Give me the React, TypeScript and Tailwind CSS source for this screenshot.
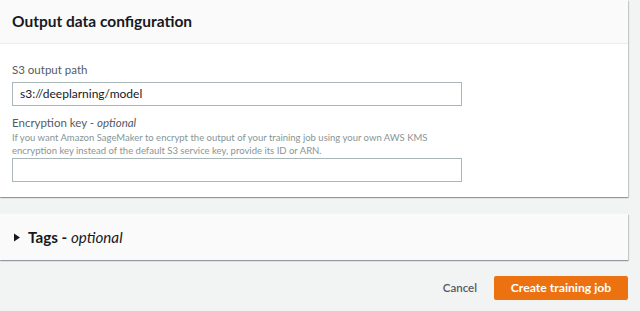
import React from "react";

export default function App() {
  return (
    <div
      className="w-[640px] h-[311px] bg-[#f2f3f3] overflow-hidden"
      style={{ fontFamily: 'Lato, "Liberation Sans", sans-serif' }}
    >
      <div className="w-[628px] bg-white shadow-[0_1px_1px_0_rgba(0,28,36,0.3),1px_1px_1px_0_rgba(0,28,36,0.15)]">
        <div className="h-[44px] bg-[#fafafa] border-b border-[#eaeded] px-3 flex items-center">
          <h2 className="text-[15.5px] font-bold text-[#16191f] leading-none">Output data configuration</h2>
        </div>
        <div className="px-3 pt-[17px] pb-[15px]">
          <div className="text-[11.5px] text-[#545b64] leading-[18px]">S3 output path</div>
          <div className="mt-[3px] w-[450px] h-[24px] border border-[#aab7b8] flex items-center px-[7px] text-[12px] text-[#16191f]">
            s3://deeplarning/model
          </div>
          <div className="mt-[9px] text-[11.5px] text-[#545b64] leading-[16px]">
            Encryption key - <i>optional</i>
          </div>
          <div className="text-[9.5px] text-[#879596] leading-[13px]">
            If you want Amazon SageMaker to encrypt the output of your training job using your own AWS KMS
            <br />
            encryption key instead of the default S3 service key, provide its ID or ARN.
          </div>
          <div className="mt-[1px] w-[450px] h-[24px] border border-[#aab7b8]" />
        </div>
      </div>
      <div className="mt-[17px] w-[628px] h-[46px] bg-[#fafafa] shadow-[0_1px_1px_0_rgba(0,28,36,0.3),1px_1px_1px_0_rgba(0,28,36,0.15)] flex items-center px-3">
        <svg width="8" height="9" viewBox="0 0 8 9" className="mr-[7px] ml-[1px]">
          <path d="M1 0.5 L7 4.5 L1 8.5 Z" fill="#16191f" />
        </svg>
        <span className="text-[15.2px] font-bold text-[#16191f]">
          Tags - <i className="font-normal">optional</i>
        </span>
      </div>
      <div className="w-[628px] flex justify-end items-center mt-[16px] gap-[17px]">
        <span className="text-[11.5px] text-[#545b64] font-semibold">Cancel</span>
        <button className="w-[134px] h-[24px] bg-[#ec7211] text-white text-[12.2px] font-bold rounded-[2px]">
          Create training job
        </button>
      </div>
    </div>
  );
}
